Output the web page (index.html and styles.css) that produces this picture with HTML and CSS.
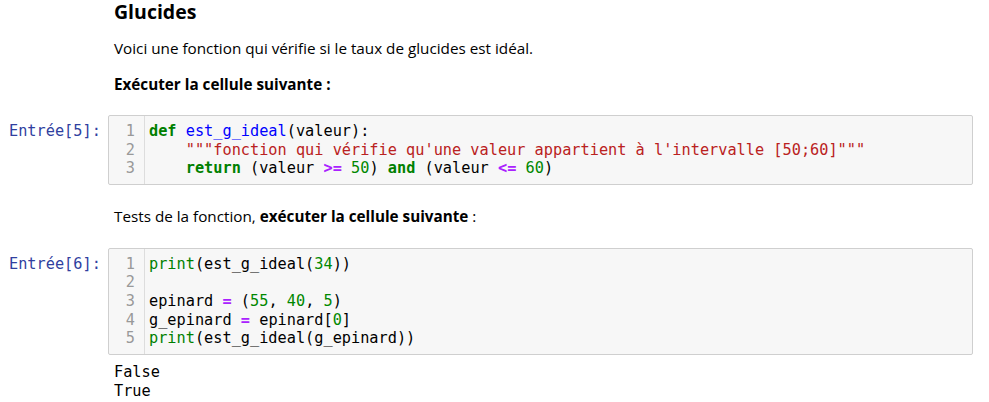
FILE: index.html
```html
<!DOCTYPE html>
<html lang="fr">
<head>
<meta charset="utf-8">
<title>Glucides</title>
<link rel="stylesheet" href="styles.css">
</head>
<body>
<div class="notebook">
  <div class="cell text-cell">
    <div class="prompt"></div>
    <div class="rendered">
      <h3 class="heading">Glucides</h3>
      <p class="para p1">Voici une fonction qui vérifie si le taux de glucides est idéal.</p>
      <p class="para p2"><strong>Exécuter la cellule suivante :</strong></p>
    </div>
  </div>

  <div class="cell code-cell c1">
    <div class="prompt in">Entrée[5]:</div>
    <div class="editor">
      <div class="gutter"><div>1</div><div>2</div><div>3</div></div>
      <pre class="code"><span class="kw">def</span> <span class="def">est_g_ideal</span>(valeur):
    <span class="str">"""fonction qui vérifie qu'une valeur appartient à l'intervalle [50;60]"""</span>
    <span class="kw">return</span> (valeur <span class="op">&gt;=</span> <span class="num">50</span>) <span class="kw">and</span> (valeur <span class="op">&lt;=</span> <span class="num">60</span>)</pre>
    </div>
  </div>

  <div class="cell text-cell">
    <div class="prompt"></div>
    <div class="rendered">
      <p class="para p3">Tests de la fonction, <strong>exécuter la cellule suivante</strong> :</p>
    </div>
  </div>

  <div class="cell code-cell c2">
    <div class="prompt in">Entrée[6]:</div>
    <div class="editor">
      <div class="gutter"><div>1</div><div>2</div><div>3</div><div>4</div><div>5</div></div>
      <pre class="code"><span class="bi">print</span>(est_g_ideal(<span class="num">34</span>))

epinard <span class="op">=</span> (<span class="num">55</span>, <span class="num">40</span>, <span class="num">5</span>)
g_epinard <span class="op">=</span> epinard[<span class="num">0</span>]
<span class="bi">print</span>(est_g_ideal(g_epinard))</pre>
    </div>
  </div>

  <div class="cell output-cell">
    <div class="prompt"></div>
    <pre class="output">False
True</pre>
  </div>
</div>
</body>
</html>
```

FILE: styles.css
```css
html, body {
  margin: 0;
  padding: 0;
  background: #ffffff;
}

body {
  font-family: "Open Sans", "Noto Sans", sans-serif;
  font-size: 15.25px;
  color: #000000;
}

.cell {
  display: flex;
  align-items: flex-start;
}

.prompt {
  width: 108px;
  flex: 0 0 108px;
  box-sizing: border-box;
}

.prompt.in {
  padding-left: 9px;
  padding-top: 7px;
  font-family: "DejaVu Sans Mono", monospace;
  font-size: 15.25px;
  line-height: 18.6px;
  color: #303f9f;
}

.rendered {
  padding-left: 6px;
}

.heading {
  margin: 0;
  font-size: 19.5px;
  font-weight: 700;
  line-height: 24px;
}

.para {
  margin: 0;
  line-height: 20px;
}

.p1 { margin-top: 14px; }
.p2 { margin-top: 16px; }
.p3 { margin-top: 21px; }

.para strong { font-weight: 700; }

.code-cell.c1 { margin-top: 21px; }
.code-cell.c2 { margin-top: 22px; }

.editor {
  width: 865px;
  box-sizing: border-box;
  display: flex;
  background: #f7f7f7;
  border: 1px solid #cfcfcf;
  border-radius: 2px;
  padding: 6px 0 6px 0;
}

.gutter {
  width: 36px;
  flex: 0 0 36px;
  box-sizing: border-box;
  padding: 6px 9px 6px 0;
  margin: -6px 0 -6px 0;
  text-align: right;
  border-right: 1px solid #dddddd;
  color: #999999;
  font-family: "DejaVu Sans Mono", monospace;
  font-size: 15.25px;
  line-height: 18.6px;
}

.code {
  margin: 0;
  padding-left: 4px;
  font-family: "DejaVu Sans Mono", monospace;
  font-size: 15.25px;
  line-height: 18.6px;
  color: #000000;
  white-space: pre;
}

.kw { color: #008000; font-weight: 700; }
.def { color: #0000ff; }
.str { color: #ba2121; }
.op { color: #aa22ff; font-weight: 700; }
.num { color: #008800; }
.bi { color: #008000; }

.output-cell { margin-top: 8px; }

.output {
  margin: 0;
  padding-left: 6px;
  font-family: "DejaVu Sans Mono", monospace;
  font-size: 15.25px;
  line-height: 19px;
  color: #000000;
}
```
